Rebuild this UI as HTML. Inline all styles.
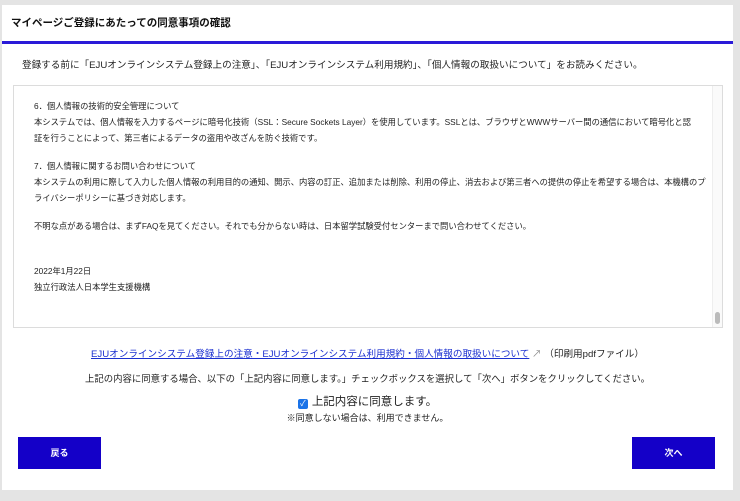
<!DOCTYPE html>
<html><head><meta charset="utf-8"><style>
*{margin:0;padding:0;box-sizing:border-box}
body{width:740px;height:501px;background:#e4e4e4;font-family:"Liberation Sans","Noto Sans CJK JP",sans-serif;color:#222;position:relative;overflow:hidden}
.card{position:absolute;left:2px;top:5px;width:731px;height:485px;background:#fff}
.h{position:absolute;left:9px;top:10px;font-size:10.5px;font-weight:bold;color:#111}
.bar{position:absolute;left:0;top:36px;width:731px;height:3px;background:#2a1ad8}
.intro{position:absolute;left:20px;top:52px;font-size:9.6px;white-space:nowrap}
.box{position:absolute;left:11px;top:80px;width:710px;height:243px;border:1px solid #dcdcdc}
.box .t{position:absolute;left:20px;font-size:8.3px;white-space:nowrap}
.sb{position:absolute;right:0;top:0;width:10px;height:241px;border-left:1px solid #eee;background:#fafafa}
.th{position:absolute;left:2px;top:226px;width:5px;height:12px;border-radius:3px;background:#bbb}
.c{position:absolute;left:0;width:731px;text-align:center;white-space:nowrap}
a{color:#1a2fd0;text-decoration:underline}
.btn{position:absolute;top:432px;width:83px;height:32px;background:#1400c8;color:#fff;font-size:9px;font-weight:bold;text-align:center;line-height:32px}
.cb{display:inline-block;width:10px;height:10px;background:#1a73e8;border-radius:2px;vertical-align:-1px;margin-right:4px;color:#fff;font-size:8px;line-height:10px;text-align:center}
</style></head><body>
<div class="card">
<div class="h">マイページご登録にあたっての同意事項の確認</div>
<div class="bar"></div>
<div class="intro">登録する前に「EJUオンラインシステム登録上の注意」、「EJUオンラインシステム利用規約」、「個人情報の取扱いについて」をお読みください。</div>
<div class="box">
<div class="t" style="top:14px">6．個人情報の技術的安全管理について</div>
<div class="t" style="top:30px">本システムでは、個人情報を入力するページに暗号化技術（SSL：Secure Sockets Layer）を使用しています。SSLとは、ブラウザとWWWサーバー間の通信において暗号化と認</div>
<div class="t" style="top:46px">証を行うことによって、第三者によるデータの盗用や改ざんを防ぐ技術です。</div>
<div class="t" style="top:74px">7．個人情報に関するお問い合わせについて</div>
<div class="t" style="top:90px">本システムの利用に際して入力した個人情報の利用目的の通知、開示、内容の訂正、追加または削除、利用の停止、消去および第三者への提供の停止を希望する場合は、本機構のプ</div>
<div class="t" style="top:106px">ライバシーポリシーに基づき対応します。</div>
<div class="t" style="top:134px">不明な点がある場合は、まずFAQを見てください。それでも分からない時は、日本留学試験受付センターまで問い合わせてください。</div>
<div class="t" style="top:179px">2022年1月22日</div>
<div class="t" style="top:195px">独立行政法人日本学生支援機構</div>
<div class="sb"><div class="th"></div></div>
</div>
<div class="c" style="top:341px;font-size:9.6px"><a>EJUオンラインシステム登録上の注意・EJUオンラインシステム利用規約・個人情報の取扱いについて</a> <span style="color:#888">↗</span> （印刷用pdfファイル）</div>
<div class="c" style="top:366px;font-size:9.4px">上記の内容に同意する場合、以下の「上記内容に同意します。」チェックボックスを選択して「次へ」ボタンをクリックしてください。</div>
<div class="c" style="top:388px;font-size:11.5px"><span class="cb">✓</span>上記内容に同意します。</div>
<div class="c" style="top:406px;font-size:9px">※同意しない場合は、利用できません。</div>
<div class="btn" style="left:16px">戻る</div>
<div class="btn" style="left:630px">次へ</div>
</div>
</body></html>
